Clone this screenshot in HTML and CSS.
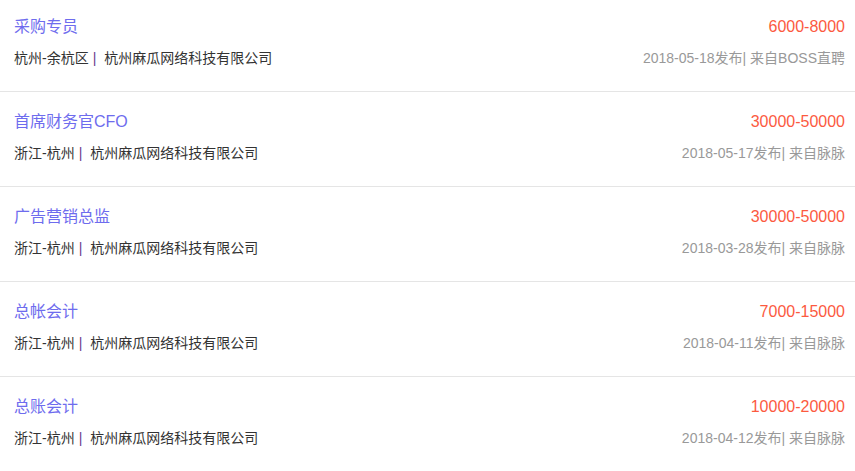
FILE: index.html
```html
<!DOCTYPE html>
<html lang="zh-CN">
<head>
  <meta charset="UTF-8">
  <title>职位列表</title>
  <meta name="viewport" content="width=device-width, initial-scale=1">
  <link rel="stylesheet" href="styles.css">
</head>
<body>

<ul class="jobs">
  <li class="job">
    <div class="job-row">
      <a class="job-title" href="#">采购专员</a>
      <span class="job-salary">6000-8000</span>
    </div>
    <div class="job-row">
      <span class="job-info">杭州-余杭区<span class="sep">|</span>杭州麻瓜网络科技有限公司</span>
      <span class="job-meta">2018-05-18发布| 来自BOSS直聘</span>
    </div>
  </li>
  <li class="job">
    <div class="job-row">
      <a class="job-title" href="#">首席财务官CFO</a>
      <span class="job-salary">30000-50000</span>
    </div>
    <div class="job-row">
      <span class="job-info">浙江-杭州<span class="sep">|</span>杭州麻瓜网络科技有限公司</span>
      <span class="job-meta">2018-05-17发布| 来自脉脉</span>
    </div>
  </li>
  <li class="job">
    <div class="job-row">
      <a class="job-title" href="#">广告营销总监</a>
      <span class="job-salary">30000-50000</span>
    </div>
    <div class="job-row">
      <span class="job-info">浙江-杭州<span class="sep">|</span>杭州麻瓜网络科技有限公司</span>
      <span class="job-meta">2018-03-28发布| 来自脉脉</span>
    </div>
  </li>
  <li class="job">
    <div class="job-row">
      <a class="job-title" href="#">总帐会计</a>
      <span class="job-salary">7000-15000</span>
    </div>
    <div class="job-row">
      <span class="job-info">浙江-杭州<span class="sep">|</span>杭州麻瓜网络科技有限公司</span>
      <span class="job-meta">2018-04-11发布| 来自脉脉</span>
    </div>
  </li>
  <li class="job">
    <div class="job-row">
      <a class="job-title" href="#">总账会计</a>
      <span class="job-salary">10000-20000</span>
    </div>
    <div class="job-row">
      <span class="job-info">浙江-杭州<span class="sep">|</span>杭州麻瓜网络科技有限公司</span>
      <span class="job-meta">2018-04-12发布| 来自脉脉</span>
    </div>
  </li>
</ul>

</body>
</html>
```

FILE: styles.css
```css
body {
  margin: 0;
  background: #fff;
  font-family: "Liberation Sans", "Noto Sans CJK SC", sans-serif;
  color: #333;
}

.jobs {
  list-style: none;
  margin: -2px 0 0;
  padding: 0;
}

.job {
  padding: 20px 10px 23px 14px;
  border-bottom: 1px solid #e5e5e5;
}

.job:first-child {
  padding-top: 19px;
}

.job-row {
  display: flex;
  justify-content: space-between;
  align-items: center;
  line-height: 20px;
}

.job-row + .job-row {
  margin-top: 11px;
}

.job-title {
  font-size: 16px;
  color: #6e6cee;
  text-decoration: none;
}

.job-salary {
  font-size: 16px;
  color: #fc5a3f;
}

.job-info {
  font-size: 14px;
  color: #333;
}

.sep {
  color: #6a3d8c;
  margin: 0 8px 0 4px;
}

.job-meta {
  font-size: 14px;
  color: #999;
}
```
